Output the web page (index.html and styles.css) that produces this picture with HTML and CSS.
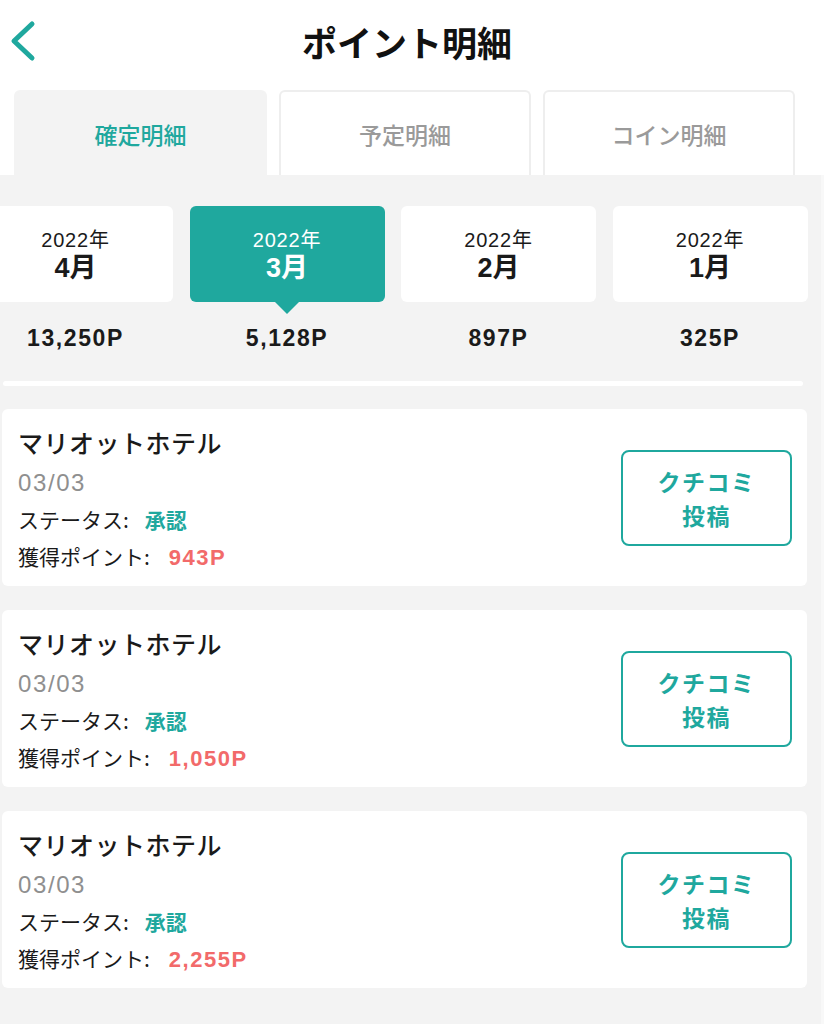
FILE: index.html
```html
<!DOCTYPE html>
<html lang="ja">
<head>
<meta charset="utf-8">
<title>ポイント明細</title>
<link rel="stylesheet" href="styles.css">
</head>
<body>
<header class="header">
  <a class="back" aria-label="戻る">
    <svg width="30" height="44" viewBox="0 0 30 44"><path d="M22 4 L4 21 L22 38" fill="none" stroke="#1fa89e" stroke-width="5" stroke-linecap="round" stroke-linejoin="round"/></svg>
  </a>
  <h1 class="title">ポイント明細</h1>
</header>
<nav class="tabs">
  <div class="tab active">確定明細</div>
  <div class="tab">予定明細</div>
  <div class="tab">コイン明細</div>
</nav>
<main class="content">
  <section class="months">
    <div class="month">
      <div class="month-card"><span class="year">2022年</span><span class="mon">4月</span></div>
      <div class="month-pts">13,250P</div>
    </div>
    <div class="month selected">
      <div class="month-card"><span class="year">2022年</span><span class="mon">3月</span></div>
      <div class="month-pts">5,128P</div>
    </div>
    <div class="month">
      <div class="month-card"><span class="year">2022年</span><span class="mon">2月</span></div>
      <div class="month-pts">897P</div>
    </div>
    <div class="month">
      <div class="month-card"><span class="year">2022年</span><span class="mon">1月</span></div>
      <div class="month-pts">325P</div>
    </div>
  </section>
  <div class="strip"></div>
  <section class="list">
    <article class="item">
      <div class="info">
        <div class="name">マリオットホテル</div>
        <div class="date">03/03</div>
        <div class="row">ステータス:<span class="status">承認</span></div>
        <div class="row pts-row">獲得ポイント:<span class="pts">943P</span></div>
      </div>
      <button class="review">クチコミ<br>投稿</button>
    </article>
    <article class="item">
      <div class="info">
        <div class="name">マリオットホテル</div>
        <div class="date">03/03</div>
        <div class="row">ステータス:<span class="status">承認</span></div>
        <div class="row pts-row">獲得ポイント:<span class="pts">1,050P</span></div>
      </div>
      <button class="review">クチコミ<br>投稿</button>
    </article>
    <article class="item">
      <div class="info">
        <div class="name">マリオットホテル</div>
        <div class="date">03/03</div>
        <div class="row">ステータス:<span class="status">承認</span></div>
        <div class="row pts-row">獲得ポイント:<span class="pts">2,255P</span></div>
      </div>
      <button class="review">クチコミ<br>投稿</button>
    </article>
  </section>
</main>
</body>
</html>
```
FILE: styles.css
```css
* { box-sizing: border-box; }
html, body { margin: 0; padding: 0; }
body {
  width: 824px;
  height: 1024px;
  overflow: hidden;
  background: #fff;
  font-family: "Liberation Sans", "Noto Sans CJK JP", sans-serif;
  color: #1a1a1a;
}
.header {
  height: 90px;
  display: flex;
  align-items: center;
  justify-content: center;
  position: relative;
}
.back {
  position: absolute;
  left: 10px;
  top: 20px;
  display: block;
  line-height: 0;
}
.title {
  margin: 0;
  margin-top: -7px;
  margin-left: -10px;
  font-family: "Noto Sans CJK JP", sans-serif;
  font-size: 35px;
  font-weight: 700;
  color: #111;
}
.tabs {
  display: flex;
  gap: 12px;
  padding-left: 14px;
  height: 85px;
}
.tab {
  width: 252px;
  height: 85px;
  display: flex;
  align-items: center;
  justify-content: center;
  font-family: "Noto Sans CJK JP", sans-serif;
  font-size: 23px;
  font-weight: 500;
  color: #9a9a9a;
  background: #fff;
  border: 2px solid #eeeeee;
  border-bottom: none;
  border-radius: 6px 6px 0 0;
}
.tab.active {
  width: 253px;
  background: #f3f3f3;
  border-color: #f3f3f3;
  color: #1fa89e;
}
.content {
  background: #f3f3f3;
  width: 821px;
  height: 849px;
  overflow: hidden;
  border-right: 3px solid #f8f8f8;
  box-sizing: content-box;
}
.months {
  display: flex;
  gap: 16.5px;
  margin-left: -22px;
  padding-top: 31px;
}
.month {
  flex: 0 0 195px;
  display: flex;
  flex-direction: column;
  align-items: center;
}
.month-card {
  position: relative;
  width: 195px;
  height: 96px;
  background: #fff;
  border-radius: 6px;
  display: flex;
  flex-direction: column;
  align-items: center;
  justify-content: center;
  color: #1a1a1a;
}
.year {
  font-size: 20px;
  line-height: 26px;
  letter-spacing: 0.8px;
  margin-top: 2px;
}
.mon {
  font-size: 27px;
  line-height: 30px;
  font-weight: 700;
}
.selected .month-card {
  background: #1fa89e;
  color: #fff;
}
.selected .month-card::after {
  content: "";
  position: absolute;
  left: 50%;
  bottom: -12px;
  margin-left: -12px;
  border-left: 12px solid transparent;
  border-right: 12px solid transparent;
  border-top: 12px solid #1fa89e;
}
.month-pts {
  margin-top: 22px;
  font-size: 23px;
  line-height: 28px;
  font-weight: 700;
  letter-spacing: 1.6px;
  color: #1a1a1a;
}
.strip {
  margin: 29px 18px 0 3px;
  height: 5px;
  background: #fff;
  border-radius: 3px;
}
.list {
  display: flex;
  flex-direction: column;
  gap: 24px;
  padding: 23px 14px 0 2px;
}
.item {
  height: 177px;
  background: #fff;
  border-radius: 6px;
  display: flex;
  align-items: center;
  justify-content: space-between;
  padding: 0 15px 0 16px;
}
.info {
  align-self: flex-start;
  padding-top: 16px;
}
.name {
  font-family: "Noto Sans CJK JP", sans-serif;
  font-size: 25px;
  line-height: 34px;
  font-weight: 500;
  letter-spacing: 0.5px;
  color: #1a1a1a;
  margin-bottom: 6px;
}
.date {
  font-size: 24px;
  line-height: 36px;
  color: #8f8f8f;
  letter-spacing: 1.6px;
}
.row {
  font-family: "Noto Sans CJK JP", sans-serif;
  font-size: 21px;
  line-height: 36px;
  color: #1a1a1a;
}
.pts-row { line-height: 38px; }
.status {
  margin-left: 16px;
  color: #1fa89e;
  font-weight: 700;
}
.pts {
  margin-left: 19px;
  font-family: "Liberation Sans", sans-serif;
  font-size: 22px;
  color: #f26a6a;
  font-weight: 700;
  letter-spacing: 1.5px;
}
.review {
  width: 171px;
  height: 96px;
  background: #fff;
  border: 2px solid #1fa89e;
  border-radius: 8px;
  font-family: "Noto Sans CJK JP", sans-serif;
  font-size: 23px;
  line-height: 34px;
  font-weight: 700;
  color: #1fa89e;
  letter-spacing: 1.5px;
  padding: 0;
}
```
